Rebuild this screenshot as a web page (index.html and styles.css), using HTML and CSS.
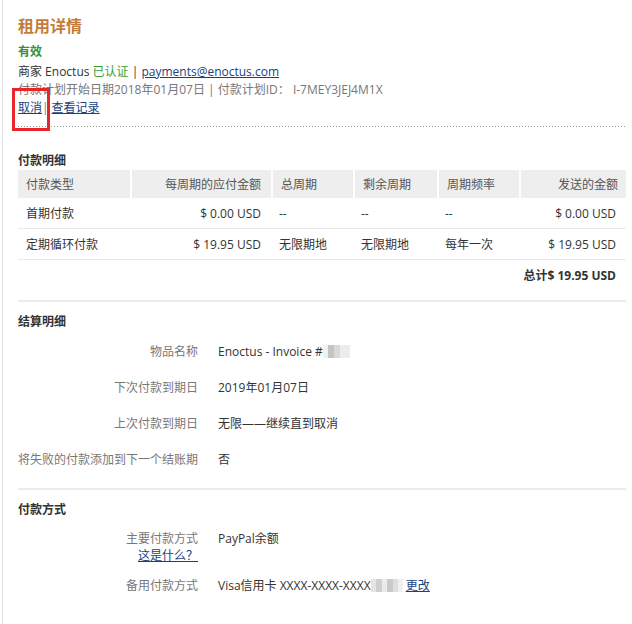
FILE: index.html
```html
<!DOCTYPE html>
<html lang="zh-CN">
<head>
  <meta charset="UTF-8">
  <title>租用详情</title>
  <link rel="stylesheet" href="styles.css">
</head>
<body>
  <div class="page">
    <div class="summary">
      <h1>租用详情</h1>
      <div class="status">有效</div>
      <div class="line">商家 Enoctus <span class="verified">已认证</span> | <a href="#">payments@enoctus.com</a></div>
      <div class="line muted">付款计划开始日期2018年01月07日 | 付款计划ID： I-7MEY3JEJ4M1X</div>
      <div class="line"><a href="#">取消</a><span class="sep">|</span><a href="#">查看记录</a></div>
      <span class="mark"></span>
    </div>
    <div class="dots"></div>

    <div class="section table-section">
      <h2>付款明细</h2>
      <table class="payments">
        <thead>
          <tr>
            <th class="c1">付款类型</th>
            <th class="c2 num">每周期的应付金额</th>
            <th class="c3">总周期</th>
            <th class="c4">剩余周期</th>
            <th class="c5">周期频率</th>
            <th class="c6 num">发送的金额</th>
          </tr>
        </thead>
        <tbody>
          <tr>
            <td>首期付款</td>
            <td class="num">$ 0.00 USD</td>
            <td>--</td>
            <td>--</td>
            <td>--</td>
            <td class="num">$ 0.00 USD</td>
          </tr>
          <tr>
            <td>定期循环付款</td>
            <td class="num">$ 19.95 USD</td>
            <td>无限期地</td>
            <td>无限期地</td>
            <td>每年一次</td>
            <td class="num">$ 19.95 USD</td>
          </tr>
          <tr class="total">
            <td colspan="6" class="num">总计$ 19.95 USD</td>
          </tr>
        </tbody>
      </table>
    </div>

    <div class="section">
      <h2>结算明细</h2>
      <div class="details">
        <div class="row"><span class="label">物品名称</span><span class="value">Enoctus - Invoice #<span class="blur blur-id"></span></span></div>
        <div class="row"><span class="label">下次付款到期日</span><span class="value">2019年01月07日</span></div>
        <div class="row"><span class="label">上次付款到期日</span><span class="value">无限——继续直到取消</span></div>
        <div class="row"><span class="label">将失败的付款添加到下一个结账期</span><span class="value">否</span></div>
      </div>
    </div>

    <div class="section methods-section">
      <h2>付款方式</h2>
      <div class="details methods">
        <div class="row"><span class="label">主要付款方式<br><a href="#">这是什么？</a></span><span class="value">PayPal余额</span></div>
        <div class="row"><span class="label">备用付款方式</span><span class="value">Visa信用卡 XXXX-XXXX-XXXX<span class="blur blur-card"></span> <a href="#">更改</a></span></div>
      </div>
    </div>
  </div>
</body>
</html>
```

FILE: styles.css
```css
body {
  margin: 0;
  font-family: "Open Sans", "Noto Sans CJK SC", sans-serif;
  font-size: 12px;
  color: #333;
  background: #fff;
}

.page {
  margin-left: 2px;
  border-left: 1px solid #e2e3e8;
  padding: 0 6px 0 15px;
  min-height: 624px;
}

a {
  color: #1b3f80;
  text-decoration: underline;
}

.summary {
  position: relative;
}

h1 {
  margin: 0;
  padding-top: 16px;
  font-size: 16px;
  line-height: 20px;
  color: #c47c38;
}

.status {
  margin: 7px 0 2px;
  line-height: 18px;
  font-weight: bold;
  color: #3a8f3a;
}

.line {
  line-height: 18px;
}

.verified {
  color: #3aa03a;
}

.muted {
  color: #777;
}

.sep {
  color: #777;
  margin-right: 3px;
}

.mark {
  position: absolute;
  left: -6px;
  top: 88px;
  width: 32px;
  height: 37px;
  border: 3px solid #e8262a;
}

.dots {
  height: 1px;
  margin-top: 9px;
  background: linear-gradient(to right, #999 1px, transparent 1px) repeat-x;
  background-size: 3px 1px;
}

.section {
  border-top: 2px solid #ececec;
  padding: 11px 0 10px;
}

.table-section {
  border-top: none;
  padding-top: 25px;
  padding-bottom: 11px;
}

h2 {
  margin: 0;
  font-size: 12px;
  line-height: 18px;
  font-weight: bold;
  color: #333;
}

.payments {
  width: 100%;
  border-collapse: separate;
  border-spacing: 0;
  table-layout: fixed;
}

.payments th,
.payments td {
  box-sizing: border-box;
  padding: 0 8px;
}

.payments th {
  background: #eee;
  font-weight: normal;
  text-align: left;
  height: 28px;
  color: #555;
  border-left: 2px solid #fff;
}

.payments th:first-child {
  border-left: none;
}

.payments td {
  height: 31px;
  border-bottom: 1px solid #e8e8e8;
}

.payments .num {
  text-align: right;
  padding-right: 10px;
}

.payments th.c6 {
  padding-right: 8px;
}

.c1 { width: 112px; }
.c2 { width: 141px; }
.c3 { width: 82px; }
.c4 { width: 84px; }
.c5 { width: 82px; }

.payments .total td {
  border-bottom: none;
  height: 29px;
  font-weight: bold;
}

.details {
  margin-top: 3px;
}

.row {
  display: grid;
  grid-template-columns: 180px 1fr;
  column-gap: 20px;
  padding: 9px 0;
  line-height: 18px;
}

.label {
  text-align: right;
  color: #777;
}

.methods {
  margin-top: 11px;
  padding-bottom: 10px;
}

.methods .row {
  padding: 0;
  line-height: 17px;
}

.methods .row + .row {
  margin-top: 13px;
}

.blur {
  display: inline-block;
  height: 13px;
  vertical-align: -2px;
}

.blur-id {
  width: 27px;
  background: linear-gradient(to right, #f1f1f1 0 5px, #c4c4c4 5px 11px, #d9d9d9 11px 17px, #ececec 17px 27px);
}

.blur-card {
  width: 32px;
  background: linear-gradient(to right, #e4e4e4 0 5px, #cfcfcf 5px 11px, #ebebeb 11px 16px, #c9c9c9 16px 22px, #dedede 22px 27px, #f0f0f0 27px 32px);
}
```
